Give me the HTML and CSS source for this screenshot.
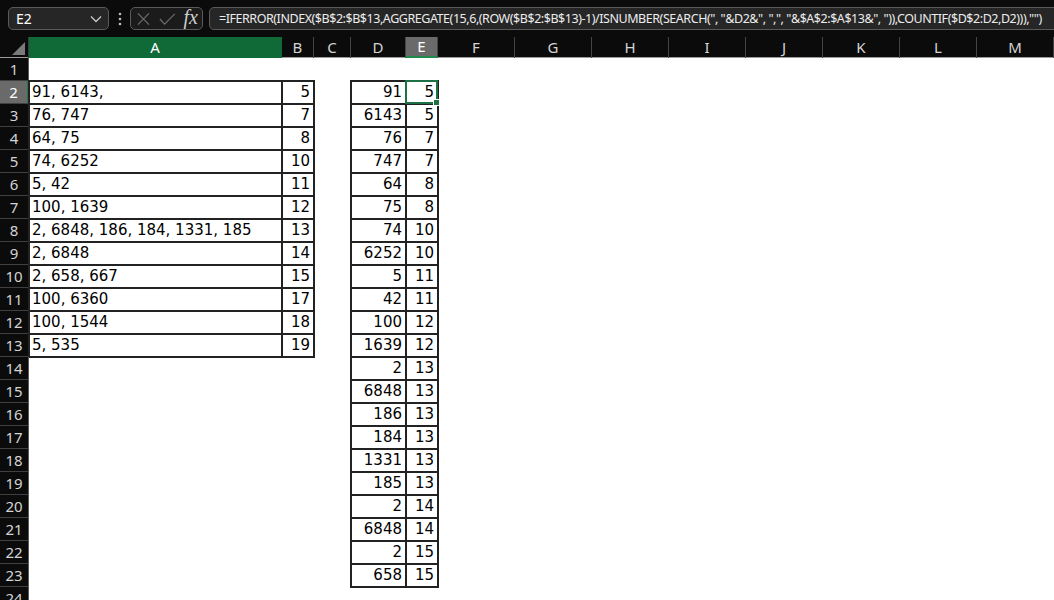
FILE: index.html
```html
<!DOCTYPE html>
<html>
<head>
<meta charset="utf-8">
<link rel="stylesheet" href="styles.css">
</head>
<body>
<div class="topbar">
  <div class="namebox"><span>E2</span>
    <svg class="chev" width="12" height="8" viewBox="0 0 12 8"><polyline points="1,1.5 6,6.5 11,1.5" fill="none" stroke="#c8c8c8" stroke-width="1.3"/></svg>
  </div>
  <div class="dots"><svg width="4" height="14" viewBox="0 0 4 14"><circle cx="2" cy="2" r="1.3" fill="#bdbdbd"/><circle cx="2" cy="7" r="1.3" fill="#bdbdbd"/><circle cx="2" cy="12" r="1.3" fill="#bdbdbd"/></svg></div>
  <div class="fxbox">
    <svg width="16" height="16" viewBox="0 0 16 16"><path d="M2 2 L14 14 M14 2 L2 14" stroke="#6c6c6c" stroke-width="1.3" fill="none"/></svg>
    <svg width="18" height="14" viewBox="0 0 18 14"><polyline points="1,7 6,12.5 17,1.5" stroke="#6c6c6c" stroke-width="1.3" fill="none"/></svg>
    <span class="fx">fx</span>
  </div>
  <div class="formula">=IFERROR(INDEX($B$2:$B$13,AGGREGATE(15,6,(ROW($B$2:$B$13)-1)/ISNUMBER(SEARCH(", "&amp;D2&amp;", ",", "&amp;$A$2:$A$13&amp;", ")),COUNTIF($D$2:D2,D2))),"")</div>
</div>

<div class="sheet">
  <div class="row head">
    <div class="corner"><span class="tri"></span></div>
    <div class="ch cha">A</div><div class="ch">B</div><div class="ch">C</div><div class="ch">D</div><div class="ch chsel">E</div><div class="ch">F</div><div class="ch">G</div><div class="ch">H</div><div class="ch">I</div><div class="ch">J</div><div class="ch">K</div><div class="ch">L</div><div class="ch">M</div>
  </div>
  <div class="row"><div class="rh">1</div></div>
  <div class="row"><div class="rh rhsel">2</div><div class="c cA">91, 6143,</div><div class="c cB">5</div><div class="c cD">91</div><div class="c cE sel">5<span class="handle"></span></div></div>
  <div class="row"><div class="rh">3</div><div class="c cA">76, 747</div><div class="c cB">7</div><div class="c cD">6143</div><div class="c cE">5</div></div>
  <div class="row"><div class="rh">4</div><div class="c cA">64, 75</div><div class="c cB">8</div><div class="c cD">76</div><div class="c cE">7</div></div>
  <div class="row"><div class="rh">5</div><div class="c cA">74, 6252</div><div class="c cB">10</div><div class="c cD">747</div><div class="c cE">7</div></div>
  <div class="row"><div class="rh">6</div><div class="c cA">5, 42</div><div class="c cB">11</div><div class="c cD">64</div><div class="c cE">8</div></div>
  <div class="row"><div class="rh">7</div><div class="c cA">100, 1639</div><div class="c cB">12</div><div class="c cD">75</div><div class="c cE">8</div></div>
  <div class="row"><div class="rh">8</div><div class="c cA">2, 6848, 186, 184, 1331, 185</div><div class="c cB">13</div><div class="c cD">74</div><div class="c cE">10</div></div>
  <div class="row"><div class="rh">9</div><div class="c cA">2, 6848</div><div class="c cB">14</div><div class="c cD">6252</div><div class="c cE">10</div></div>
  <div class="row"><div class="rh">10</div><div class="c cA">2, 658, 667</div><div class="c cB">15</div><div class="c cD">5</div><div class="c cE">11</div></div>
  <div class="row"><div class="rh">11</div><div class="c cA">100, 6360</div><div class="c cB">17</div><div class="c cD">42</div><div class="c cE">11</div></div>
  <div class="row"><div class="rh">12</div><div class="c cA">100, 1544</div><div class="c cB">18</div><div class="c cD">100</div><div class="c cE">12</div></div>
  <div class="row"><div class="rh">13</div><div class="c cA">5, 535</div><div class="c cB">19</div><div class="c cD">1639</div><div class="c cE">12</div></div>
  <div class="row"><div class="rh">14</div><div class="c cD">2</div><div class="c cE">13</div></div>
  <div class="row"><div class="rh">15</div><div class="c cD">6848</div><div class="c cE">13</div></div>
  <div class="row"><div class="rh">16</div><div class="c cD">186</div><div class="c cE">13</div></div>
  <div class="row"><div class="rh">17</div><div class="c cD">184</div><div class="c cE">13</div></div>
  <div class="row"><div class="rh">18</div><div class="c cD">1331</div><div class="c cE">13</div></div>
  <div class="row"><div class="rh">19</div><div class="c cD">185</div><div class="c cE">13</div></div>
  <div class="row"><div class="rh">20</div><div class="c cD">2</div><div class="c cE">14</div></div>
  <div class="row"><div class="rh">21</div><div class="c cD">6848</div><div class="c cE">14</div></div>
  <div class="row"><div class="rh">22</div><div class="c cD">2</div><div class="c cE">15</div></div>
  <div class="row"><div class="rh">23</div><div class="c cD">658</div><div class="c cE">15</div></div>
  <div class="row"><div class="rh">24</div></div>
</div>
</body>
</html>
```
FILE: styles.css
```css
html, body {
  margin: 0;
  padding: 0;
  background: #ffffff;
  overflow: hidden;
  height: 600px;
}
body {
  font-family: "Noto Sans", "DejaVu Sans", sans-serif;
}
.topbar {
  height: 37px;
  background: #0b0b0b;
  display: flex;
  align-items: center;
  padding-left: 8px;
  box-sizing: border-box;
  overflow: hidden;
}
.namebox {
  width: 101px;
  height: 23px;
  box-sizing: border-box;
  border: 1px solid #5a5a5a;
  border-radius: 5px;
  background: #262626;
  display: flex;
  align-items: center;
  justify-content: space-between;
  padding: 0 6px 0 7px;
  color: #ffffff;
  font-size: 14px;
  flex: none;
}
.dots {
  width: 21px;
  display: flex;
  justify-content: center;
  align-items: center;
  flex: none;
}
.fxbox {
  width: 73px;
  height: 23px;
  box-sizing: border-box;
  border: 1px solid #5a5a5a;
  border-radius: 5px;
  background: #1b1b1b;
  display: flex;
  align-items: center;
  padding: 0 4px 0 5px;
  gap: 8px;
  flex: none;
}
.fx {
  font-family: "Liberation Serif", "DejaVu Serif", serif;
  font-style: italic;
  font-size: 20px;
  color: #cfcfcf;
  line-height: 1;
  margin-top: -3px;
}
.formula {
  margin-left: 6px;
  height: 23px;
  box-sizing: border-box;
  border: 1px solid #5a5a5a;
  border-radius: 5px;
  background: #262626;
  color: #ececec;
  font-family: "Noto Sans", sans-serif;
  font-size: 12.5px;
  letter-spacing: -0.45px;
  line-height: 21px;
  padding-left: 9px;
  white-space: nowrap;
  flex: 1 0 860px;
}

.sheet {
  width: 1054px;
}
.row {
  display: grid;
  grid-template-columns: 29px 253px 32px 37px 55px 32px 77px 77px 77px 77px 77px 77px 77px 77px;
  height: 23px;
}
.row.head {
  height: 21px;
  background: #0b0b0b;
  border-bottom: 1px solid #9a9a9a;
  box-sizing: border-box;
}
.corner {
  position: relative;
  border-right: 1px solid #3a3a3a;
}
.tri {
  position: absolute;
  right: 3px;
  bottom: 3px;
  width: 0;
  height: 0;
  border-left: 13px solid transparent;
  border-bottom: 13px solid #7a7a7a;
}
.ch {
  color: #d4d4d4;
  font-size: 15px;
  text-align: center;
  line-height: 20px;
  border-right: 1px solid #444;
  box-sizing: border-box;
}
.ch.cha {
  background: #0f6a37;
  color: #ffffff;
  border-right-color: #0f6a37;
}
.ch.chsel {
  background: #6a6a6a;
  color: #ffffff;
  border-bottom: 2px solid #1f8a4c;
  line-height: 19px;
}
.rh {
  grid-column: 1;
  background: #0b0b0b;
  color: #d4d4d4;
  font-size: 15px;
  text-align: center;
  line-height: 22px;
  border-bottom: 1px solid #404040;
  border-right: 1px solid #5a5a5a;
  box-sizing: border-box;
}
.rh.rhsel {
  background: #6a6a6a;
  color: #ffffff;
  border-right: 2px solid #1f7a45;
}
.c {
  font-family: "DejaVu Sans", sans-serif;
  font-size: 15px;
  color: #000;
  line-height: 21px;
  border: 1px solid #222;
  box-shadow: 0 0 0 1px #222;
  box-sizing: border-box;
  padding: 0 3px 0 2px;
  white-space: nowrap;
  overflow: visible;
}
.cA { grid-column: 2; text-align: left; }
.cB { grid-column: 3; text-align: right; }
.cD { grid-column: 5; text-align: right; }
.cE { grid-column: 6; text-align: right; }
.sel {
  position: relative;
}
.sel::after {
  content: "";
  position: absolute;
  left: -2px;
  top: -2px;
  right: -1px;
  bottom: -1px;
  border: 2px solid #1e7145;
}
.handle {
  position: absolute;
  right: -3px;
  bottom: -3px;
  width: 5px;
  height: 5px;
  background: #1e7145;
  border: 1px solid #fff;
  z-index: 2;
}
```
